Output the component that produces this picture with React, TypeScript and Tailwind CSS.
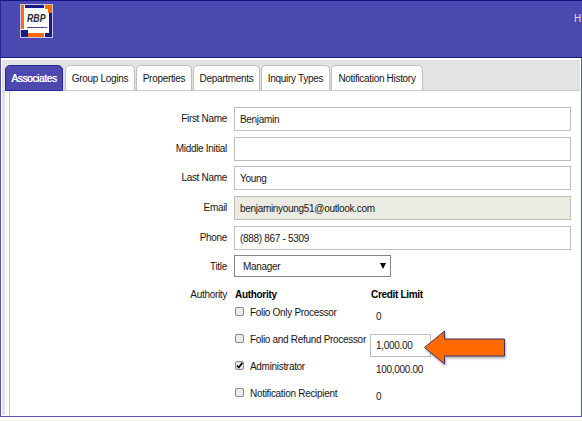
import { ReactNode } from "react";

const tabs = [
  { label: "Associates", box: "w-[58px] mr-[2px]" },
  { label: "Group Logins", box: "w-[70px] mr-px" },
  { label: "Properties", box: "w-[56px] mr-px" },
  { label: "Departments", box: "w-[67px] mr-px" },
  { label: "Inquiry Types", box: "w-[69px] mr-px" },
  { label: "Notification History", box: "w-[92px]" },
];

const fields = [
  { label: "First Name", value: "Benjamin", row: "h-[30px]", fill: "bg-white" },
  { label: "Middle Initial", value: "", row: "h-[29px]", fill: "bg-white" },
  { label: "Last Name", value: "Young", row: "h-[30px]", fill: "bg-white" },
  { label: "Email", value: "benjaminyoung51@outlook.com", row: "h-[30px]", fill: "bg-[#ebebe4]" },
  { label: "Phone", value: "(888) 867 - 5309", row: "h-[29px]", fill: "bg-white" },
];

const authorities = [
  { label: "Folio Only Processor", checked: false },
  { label: "Folio and Refund Processor", checked: false },
  { label: "Administrator", checked: true },
  { label: "Notification Recipient", checked: false },
];

function Label({ children }: { children: ReactNode }) {
  return <div className="mr-[7px] h-[23px] w-[217px] shrink-0 text-right leading-[23px]">{children}</div>;
}

function Checkbox({ checked }: { checked: boolean }) {
  return (
    <span className="ml-px flex h-[9px] w-[9px] shrink-0 items-center justify-center rounded-[2px] border border-[#858585] bg-[#ececec]">
      {checked && (
        <svg viewBox="0 0 7 7" className="h-[7px] w-[7px] overflow-visible">
          <path d="M1 3.5 L2.8 5.5 L6.3 0.8" fill="none" stroke="#000" strokeWidth="1.7" />
        </svg>
      )}
    </span>
  );
}

function Logo() {
  return (
    <svg viewBox="0 0 33 34" className="h-[34px] w-[33px] overflow-visible tracking-normal">
      <rect width="33" height="34" fill="#c9c7df" />
      <rect x="1" y="1" width="31" height="32" fill="#fff" />
      <path d="M1 1H4V25H1Z M8 29H24V33H8Z" fill="#ff6a0d" />
      <path d="M5 1H24V4H5Z M29 9H32V33H25V29H29Z" fill="#1a1a86" />
      <rect x="25" y="1" width="7" height="8" fill="#ff6a0d" />
      <rect x="1" y="26" width="7" height="7" fill="#1a1a86" />
      <rect x="5" y="5" width="23" height="21" fill="#fff" />
      <text x="7" y="18.4" fontSize="10" fontStyle="italic" fontWeight="bold" textLength="18.5" lengthAdjust="spacingAndGlyphs" fill="#25252f">RBP</text>
      <text x="7.2" y="23.6" fontSize="2.1" fontStyle="italic" fontWeight="bold" fill="#202080" stroke="#202080" strokeWidth="0.2">Refined Business IP</text>
    </svg>
  );
}

export default function App() {
  return (
    <div className="h-[421px] w-[582px] overflow-hidden bg-white font-['Liberation_Sans',Arial,sans-serif] text-[10px] tracking-[-0.31px] text-[#151515]">
      <div className="relative flex h-[417px] w-[582px] flex-col border border-[#5c55a5] bg-white">
        <header className="-mx-px -mt-px flex h-[58px] shrink-0 justify-between border-y border-l border-y-[#15158a] border-l-[#24249a] bg-[#4b48b0]">
          <div className="ml-[19px] mt-[3px]"><Logo /></div>
          <span className="mt-[10px] w-[8px] text-[10px] leading-[15px] text-[#dcdcf0]">H</span>
        </header>
        <div className="mx-px mt-[2px] flex h-[31px] shrink-0 border-b border-[#c8c8c8] bg-[#e3e3e3] pl-[3px] pt-[5px]">
          {tabs.map((tab, i) => (
            <div
              key={tab.label}
              className={`${tab.box} flex h-[26px] shrink-0 items-center justify-center whitespace-nowrap rounded-t-[5px] border ${
                i === 0 ? "border-[#26269a] bg-[#4b48b0] text-white [text-shadow:0.3px_0_0_#fff]" : "border-[#bdbdbd] border-b-[#c8c8c8] bg-white"
              }`}
            >
              {tab.label}
            </div>
          ))}
        </div>
        <main className="ml-px flex min-h-0 flex-1">
          <div className="mb-px w-[3px] bg-[#e3e3e3]" />
          <div className="mb-px mr-[1px] w-[3px] bg-[#fafafa]" />
          <div className="flex-1 border-l border-[#c4c4c4] pt-[16px]">
            {fields.map((field) => (
              <div key={field.label} className={`flex ${field.row}`}>
                <Label>{field.label}</Label>
                <div className={`h-[24px] w-[337px] border border-[#bdbdbd] pl-[5px] leading-[23px] ${field.fill}`}>
                  {field.value}
                </div>
              </div>
            ))}
            <div className="flex h-[28px]">
              <Label>Title</Label>
              <div className="flex h-[22px] w-[157px] items-center justify-between border border-[#858585] pl-[8px] pr-[4px]">
                Manager
                <svg viewBox="0 0 6 6" className="h-[6px] w-[6px]"><path d="M0 0H6L3 6Z" fill="#000" /></svg>
              </div>
            </div>
            <div className="flex">
              <Label>Authority</Label>
              <div className="w-[136px] shrink-0">
                <div className="h-[24px] pl-px font-bold leading-[23px] text-black">Authority</div>
                {authorities.map((item) => (
                  <div key={item.label} className="flex h-[27px] whitespace-nowrap leading-[11px]">
                    <Checkbox checked={item.checked} />
                    <span className="ml-[6px]">{item.label}</span>
                  </div>
                ))}
              </div>
              <div className="whitespace-nowrap">
                <div className="h-[24px] pl-px font-bold leading-[23px] text-black">Credit Limit</div>
                <div className="h-[27px] pl-[6px] pt-[4px] leading-[11px]">0</div>
                <div className="h-[23px] w-[61px] border border-[#bdbdbd] pl-[5px] leading-[22px]">1,000.00</div>
                <div className="h-[27px] pl-[6px] pt-[7px] leading-[11px]">100,000.00</div>
                <div className="pl-[6px] pt-[7px] leading-[11px]">0</div>
              </div>
            </div>
          </div>
        </main>
        <svg viewBox="0 0 86 38" className="absolute left-[422px] top-[328px] h-[38px] w-[86px] overflow-visible drop-shadow-[1px_2px_1px_rgba(0,0,0,0.3)]">
          <path d="M1.5 18.5 L21.5 2 V10 H81.5 V27 H21.5 V35 Z" fill="#ff6a00" stroke="#4a2f66" strokeWidth="1" />
        </svg>
      </div>
    </div>
  );
}
